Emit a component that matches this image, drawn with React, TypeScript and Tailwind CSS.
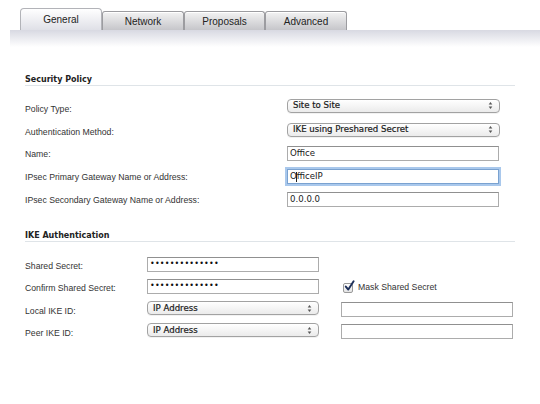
import type { ReactNode } from "react";

const LABEL = "font-['Liberation_Sans',Arial,sans-serif] text-[8.7px] text-[#333]";
const FIELD = "font-['DejaVu_Sans',Verdana,sans-serif] text-[8.6px] text-[#1a1a1a]";

function Tab({ label, w, active }: { label: string; w: string; active?: boolean }) {
  return active ? (
    <div
      className={`${w} flex h-[22px] items-start justify-center rounded-t-[4px] border border-b-0 border-[#b2b3b8] bg-gradient-to-b from-white to-[#dfe0e7] pt-[3px] font-['Liberation_Sans',Arial,sans-serif] text-[10px] text-[#222]`}
    >
      {label}
    </div>
  ) : (
    <div
      className={`${w} flex h-[19px] items-start justify-center rounded-t-[3px] border border-b-0 border-[#9c9ca0] bg-gradient-to-b from-[#f3f3f3] to-[#c6c6ca] pt-[2px] font-['Liberation_Sans',Arial,sans-serif] text-[10px] text-[#222] shadow-[inset_0_1px_0_#fff]`}
    >
      {label}
    </div>
  );
}

function Arrows() {
  return (
    <svg width="5" height="9" viewBox="0 0 5 9" className="shrink-0">
      <path d="M2.5 1 L4.3 3.4 L0.7 3.4 Z" fill="#555" />
      <path d="M2.5 8 L4.3 5.6 L0.7 5.6 Z" fill="#555" />
    </svg>
  );
}

function Select({ value, w }: { value: string; w: string }) {
  return (
    <div
      className={`${w} ${FIELD} flex h-[14px] items-center justify-between rounded-[4px] border border-[#a2a2a2] bg-gradient-to-b from-white to-[#ebebeb] pl-[5px] pr-[6px] shadow-[0_1px_0_rgba(0,0,0,0.05)]`}
    >
      <span className="leading-none [-webkit-text-stroke:0.2px_#1a1a1a]">{value}</span>
      <Arrows />
    </div>
  );
}

function Input({ w, children, focus }: { w: string; children?: ReactNode; focus?: boolean }) {
  return (
    <div
      className={`${w} ${FIELD} flex h-[15px] items-center border pl-[2px] ${
        focus
          ? "border-[#7aa2d0] shadow-[0_0_0_2px_#a9c8ec]"
          : "border-[#acacac] border-t-[#909090] bg-white"
      }`}
    >
      {children}
    </div>
  );
}

function Heading({ title }: { title: string }) {
  return (
    <div className="h-[13px] w-[490px] border-b border-[#dfe4e8] font-['DejaVu_Sans',Verdana,sans-serif] text-[8px] font-bold leading-[13px] text-[#222]">
      {title}
    </div>
  );
}

function Row({
  label,
  h,
  lw,
  pt,
  children,
}: {
  label: string;
  h: string;
  lw: string;
  pt: string;
  children: ReactNode;
}) {
  return (
    <div className={`flex ${h} items-center`}>
      <div className={`${lw} ${pt} ${LABEL} shrink-0`}>{label}</div>
      {children}
    </div>
  );
}

function Dots() {
  return <span className="text-[8px] tracking-[0.2px] text-[#111]">••••••••••••••</span>;
}

export default function App() {
  return (
    <div className="h-[404px] w-[540px] overflow-hidden bg-white">
      <div className="flex h-[30px] items-end pl-[20px] pt-[8px]">
        <Tab label="General" w="w-[82px]" active />
        <Tab label="Network" w="w-[82px]" />
        <Tab label="Proposals" w="w-[81px]" />
        <Tab label="Advanced" w="w-[82px]" />
      </div>
      <div className="ml-[10px] h-[17px] bg-gradient-to-b from-[#d8d9e2] to-white" />

      <div className="pl-[25px]">
        <div className="mt-[26px]">
          <Heading title="Security Policy" />
        </div>
        <div className="mt-[8px]">
          <Row label="Policy Type:" h="h-[23px]" lw="w-[262px]" pt="pt-[9px]">
            <Select value="Site to Site" w="w-[213px]" />
          </Row>
          <Row label="Authentication Method:" h="h-[25px]" lw="w-[262px]" pt="pt-[7px]">
            <Select value="IKE using Preshared Secret" w="w-[213px]" />
          </Row>
          <Row label="Name:" h="h-[23px]" lw="w-[262px]" pt="pt-[3px]">
            <Input w="w-[212px]">Office</Input>
          </Row>
          <Row label="IPsec Primary Gateway Name or Address:" h="h-[23px]" lw="w-[262px]" pt="pt-[3px]">
            <Input w="w-[212px]" focus>
              O<span className="mx-[-0.5px] inline-block h-[10px] w-[1px] bg-[#222]" />fficeIP
            </Input>
          </Row>
          <Row label="IPsec Secondary Gateway Name or Address:" h="h-[23px]" lw="w-[262px]" pt="pt-[3px]">
            <Input w="w-[212px]">0.0.0.0</Input>
          </Row>
        </div>

        <div className="mt-[18px]">
          <Heading title="IKE Authentication" />
        </div>
        <div className="mt-[11px]">
          <Row label="Shared Secret:" h="h-[22px]" lw="w-[122px]" pt="pt-[5px]">
            <Input w="w-[172px]">
              <Dots />
            </Input>
          </Row>
          <Row label="Confirm Shared Secret:" h="h-[22px]" lw="w-[122px]" pt="pt-[5px]">
            <Input w="w-[172px]">
              <Dots />
            </Input>
            <div className="ml-[24px] flex items-center gap-[5px] pt-[4px]">
              <div className="relative h-[10px] w-[10px] rounded-[2px] border border-[#9a9a9a] bg-gradient-to-b from-white to-[#e4e4e4]">
                <svg
                  width="11"
                  height="12"
                  viewBox="0 0 11 12"
                  className="absolute left-[0px] top-[-4px]"
                >
                  <path
                    d="M1.8 6.6 L4.3 9.6 L9.6 1.2"
                    fill="none"
                    stroke="#1d2f5a"
                    strokeWidth="1.9"
                    strokeLinecap="round"
                    strokeLinejoin="round"
                  />
                </svg>
              </div>
              <span className={LABEL}>Mask Shared Secret</span>
            </div>
          </Row>
          <Row label="Local IKE ID:" h="h-[22px]" lw="w-[122px]" pt="pt-[7px]">
            <Select value="IP Address" w="w-[172px]" />
            <div className="ml-[22px] pt-[2px]">
              <Input w="w-[172px]" />
            </div>
          </Row>
          <Row label="Peer IKE ID:" h="h-[22px]" lw="w-[122px]" pt="pt-[8px]">
            <Select value="IP Address" w="w-[172px]" />
            <div className="ml-[22px] pt-[2px]">
              <Input w="w-[172px]" />
            </div>
          </Row>
        </div>
      </div>
    </div>
  );
}
